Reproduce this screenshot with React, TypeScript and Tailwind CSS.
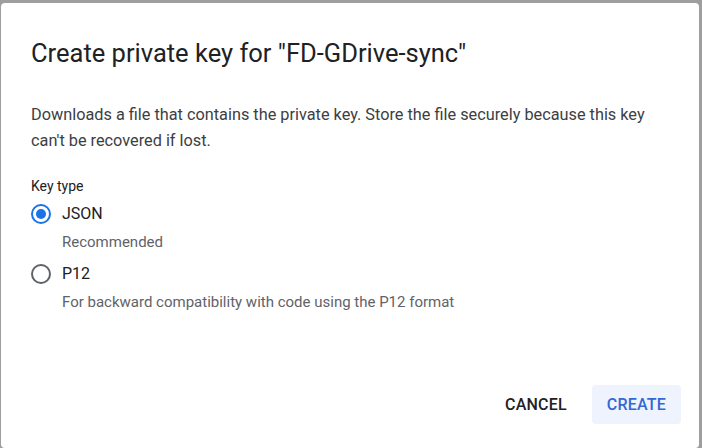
import { useState } from "react";

type KeyType = "json" | "p12";

const options: { value: KeyType; label: string; hint: string }[] = [
  { value: "json", label: "JSON", hint: "Recommended" },
  { value: "p12", label: "P12", hint: "For backward compatibility with code using the P12 format" },
];

function Radio({ checked }: { checked: boolean }) {
  return (
    <span
      className={`flex h-[20px] w-[20px] items-center justify-center rounded-full border-[2px] ${
        checked ? "border-[#1a73e8]" : "border-[#5f6368]"
      }`}
    >
      {checked && <span className="h-[10px] w-[10px] rounded-full bg-[#1a73e8]" />}
    </span>
  );
}

export default function App() {
  const [keyType, setKeyType] = useState<KeyType>("json");

  return (
    <div className="h-[448px] w-[702px] bg-[#9e9e9e] pl-[1px] pr-[3px] pt-[3px] font-['Roboto',sans-serif]">
      <div className="flex h-full flex-col rounded-[4px] bg-white pl-[30px] pr-[18px] pt-[34px]">
        <h2 className="text-[25.5px] leading-[32px] text-[#202124]">
          Create private key for "FD-GDrive-sync"
        </h2>

        <p className="mt-[33px] max-w-[630px] text-[16.3px] leading-[26px] text-[#3c4043]">
          Downloads a file that contains the private key. Store the file securely because this key
          can't be recovered if lost.
        </p>

        <div className="mt-[22px] text-[14px] leading-[20px] text-[#202124]">Key type</div>

        <div className="mt-[6px] flex flex-col">
          {options.map((o) => (
            <button
              key={o.value}
              onClick={() => setKeyType(o.value)}
              className="flex flex-col items-start pb-[10px] text-left"
            >
              <div className="flex items-center gap-[11px]">
                <Radio checked={keyType === o.value} />
                <span className="text-[16px] leading-[24px] text-[#202124]">{o.label}</span>
              </div>
              <span className="mt-[6px] pl-[31px] text-[15px] leading-[20px] text-[#5f6368]">
                {o.hint}
              </span>
            </button>
          ))}
        </div>

        <div className="mt-auto flex items-center justify-end gap-[9px] pb-[24px]">
          <button className="h-[39px] rounded-[4px] px-[16px] text-[16px] font-medium tracking-[0.2px] text-[#202124]">
            CANCEL
          </button>
          <button className="h-[39px] rounded-[4px] bg-[#eef3fd] px-[15px] text-[16px] font-medium tracking-[0.2px] text-[#3367d6]">
            CREATE
          </button>
        </div>
      </div>
    </div>
  );
}
